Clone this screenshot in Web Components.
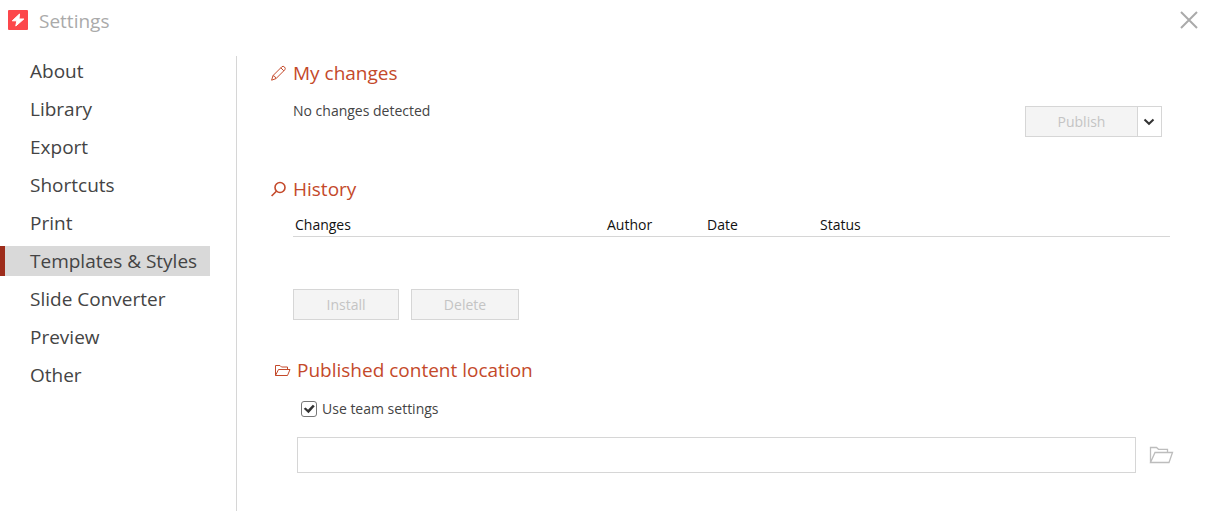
<!DOCTYPE html>
<html lang="en">
<head>
<meta charset="utf-8">
<meta name="viewport" content="width=device-width, initial-scale=1">
<title>Settings</title>
<style>
  html, body { height: 100%; }
  body {
    margin: 0;
    background: #fff;
    color: #444;
    font-family: "Open Sans", "Noto Sans", sans-serif;
    --accent: #c4492a;
    --line: #d6d6d6;
  }
</style>
</head>
<body>
<settings-window></settings-window>

<template id="window-template">
  <style>
    :host { display: flex; flex-direction: column; min-height: 100%; }
    .body { flex: 1; display: flex; padding-top: 14px; }
    main { flex: 1; min-width: 0; display: flex; flex-direction: column; padding: 0 36px 36px 34px; border-left: 1px solid var(--line); }
    p { margin: 0; font-size: 14px; line-height: 20px; }
    .changes { display: flex; justify-content: space-between; align-items: flex-start; padding: 11px 8px 35px 22px; }
    .changes split-button { margin-top: 5px; }
    .history { padding-left: 22px; }
    .actions { display: flex; gap: 12px; padding: 52px 0 33px; }
    .location { padding-left: 4px; }
    .location .fields { padding: 12px 0 0 22px; }
    .row { display: flex; align-items: center; gap: 13px; margin: 18px -4px 0 0; }
    .row input { flex: 1; min-width: 0; box-sizing: border-box; height: 36px; border: 1px solid var(--line); padding: 0 8px; font: 14px "Open Sans", sans-serif; background: #fff; }
    .row button { border: 0; padding: 0; background: none; display: flex; }
    .row svg { width: 25px; height: 20px; }
  </style>
  <window-header>Settings</window-header>
  <div class="body">
    <settings-nav>
      <nav-item>About</nav-item>
      <nav-item>Library</nav-item>
      <nav-item>Export</nav-item>
      <nav-item>Shortcuts</nav-item>
      <nav-item>Print</nav-item>
      <nav-item current>Templates &amp; Styles</nav-item>
      <nav-item>Slide Converter</nav-item>
      <nav-item>Preview</nav-item>
      <nav-item>Other</nav-item>
    </settings-nav>
    <main>
      <section>
        <section-title>
          <svg slot="icon" viewBox="0 0 16 16" fill="none" stroke="currentColor" stroke-width="1"><path d="M.600 15.200 2 10.600 10.800 1.800Q12.100.600 13.500 2T13.800 4.800L5 13.600ZM2 10.600Q4.300 11 5 13.600M9.800 2.800l3 3"/></svg>
          My changes
        </section-title>
        <div class="changes"><p>No changes detected</p><split-button>Publish</split-button></div>
      </section>
      <section>
        <section-title>
          <svg slot="icon" viewBox="0 0 16 16" fill="none" stroke="currentColor" stroke-width="1.600"><circle cx="9" cy="6.500" r="5"/><path d="M5.400 10.200.600 15"/></svg>
          History
        </section-title>
        <div class="history">
          <history-table></history-table>
          <div class="actions"><flat-button style="--width:106px">Install</flat-button><flat-button style="--width:108px">Delete</flat-button></div>
        </div>
      </section>
      <section class="location">
        <section-title>
          <svg slot="icon" viewBox="0 0 16 16" fill="none" stroke="currentColor" stroke-width="1"><path d="M.500 13.500V3.500H5L6.500 5H12.500V7.500M.500 13.500 3.500 7.500H15L12.500 13.500Z"/></svg>
          Published content location
        </section-title>
        <div class="fields">
          <check-option>Use team settings</check-option>
          <div class="row">
            <input type="text" aria-label="Published content location">
            <button type="button" aria-label="Browse"><svg viewBox="0 0 25 20" fill="none" stroke="#bdbdbd" stroke-width="1.300"><path d="M1.500 17.500V2.500H7.500L9.500 4.300H18.500V7.500M1.500 17.500 6 7.500H23.500L20 17.500Z"/></svg></button>
          </div>
        </div>
      </section>
    </main>
  </div>
</template>

<template id="header-template">
  <style>
    :host { display: flex; align-items: center; height: 40px; padding: 0 8px 2px; color: #aaa; }
    h1 { flex: 1; margin: 2px 0 0 11px; font-size: 19px; line-height: 28px; font-weight: 400; }
    button { border: 0; padding: 0; background: none; display: flex; }
  </style>
  <svg width="20" height="20" viewBox="0 0 20 20"><rect width="20" height="20" rx="1" fill="#fc474b"/><path d="M11.500 4 4.300 10.800H8.800L7.800 16 15.800 9H11Z" fill="#fff" stroke="#fff" stroke-linejoin="round"/></svg>
  <h1><slot></slot></h1>
  <button type="button" aria-label="Close"><svg width="18" height="18" viewBox="0 0 18 18" stroke="#aaa" stroke-width="2"><path d="M1 1 17 17M17 1 1 17"/></svg></button>
</template>

<template id="nav-template">
  <style>
    :host { display: block; flex: 0 0 236px; }
    nav { display: flex; flex-direction: column; gap: 8px; width: 210px; }
  </style>
  <nav aria-label="Settings"><slot></slot></nav>
</template>

<template id="nav-item-template">
  <style>
    :host { display: block; }
    a { display: block; box-sizing: border-box; height: 30px; padding-left: 25px; border-left: 5px solid transparent; color: #444; font-size: 19px; line-height: 30px; text-decoration: none; white-space: nowrap; }
    :host([current]) a { background: #d9d9d9; border-left-color: #9d2c1b; }
  </style>
  <a href="#"><slot></slot></a>
</template>

<template id="title-template">
  <style>
    :host { display: flex; align-items: center; height: 34px; color: var(--accent); }
    h2 { margin: 0; font-size: 19px; line-height: 34px; font-weight: 400; }
    ::slotted(svg) { width: 16px; height: 16px; margin-right: 6px; }
  </style>
  <slot name="icon"></slot><h2><slot></slot></h2>
</template>

<template id="flat-template">
  <style>
    :host { display: block; }
    button { display: block; box-sizing: border-box; width: var(--width); height: 31px; padding: 0; border: 1px solid var(--line); border-radius: 0; background: #f4f4f4; color: #c4c4c4; font: 14px "Open Sans", sans-serif; }
  </style>
  <button type="button" disabled><slot></slot></button>
</template>

<template id="split-template">
  <style>
    :host { display: flex; }
    .more { box-sizing: border-box; width: 25px; height: 31px; margin-left: -1px; padding: 0; border: 1px solid var(--line); background: #fff; display: flex; align-items: center; justify-content: center; }
  </style>
  <flat-button style="--width:113px"><slot></slot></flat-button>
  <button class="more" type="button" aria-label="More options"><svg width="13" height="8" viewBox="0 0 13 8" fill="none" stroke="#333" stroke-width="2"><path d="M1.500 1.500 6 5.800 10.500 1.500"/></svg></button>
</template>

<template id="table-template">
  <style>
    :host { display: block; }
    table { width: 100%; table-layout: fixed; border-collapse: collapse; }
    th { padding: 9px 0 1px 2px; border-bottom: 1px solid var(--line); color: #111; text-align: left; font-size: 14px; line-height: 20px; font-weight: 400; }
    .changes { width: 310px; } .author { width: 98px; } .date { width: 111px; }
  </style>
  <table>
    <thead><tr><th class="changes" scope="col">Changes</th><th class="author" scope="col">Author</th><th class="date" scope="col">Date</th><th scope="col">Status</th></tr></thead>
    <tbody></tbody>
  </table>
</template>

<template id="check-template">
  <style>
    :host { display: flex; padding-left: 4px; }
    label { display: flex; align-items: center; gap: 5px; font-size: 14px; line-height: 20px; }
    input { appearance: none; display: grid; place-items: center; box-sizing: border-box; width: 16px; height: 16px; margin: 0; border: 1px solid #777; border-radius: 3px; background: #fff; }
    input:checked::before { content: ""; width: 12px; height: 10px; background: #333; clip-path: polygon(6% 48%, 22% 36%, 42% 58%, 82% 8%, 98% 22%, 46% 92%); }
  </style>
  <label><input type="checkbox" checked><slot></slot></label>
</template>

<script>
  const define = (name, templateId) => customElements.define(name, class extends HTMLElement {
    constructor() {
      super();
      this.attachShadow({ mode: "open" })
        .append(document.getElementById(templateId).content.cloneNode(true));
    }
  });
  define("flat-button", "flat-template");
  define("split-button", "split-template");
  define("check-option", "check-template");
  define("history-table", "table-template");
  define("section-title", "title-template");
  define("nav-item", "nav-item-template");
  define("settings-nav", "nav-template");
  define("window-header", "header-template");
  define("settings-window", "window-template");
</script>
</body>
</html>
